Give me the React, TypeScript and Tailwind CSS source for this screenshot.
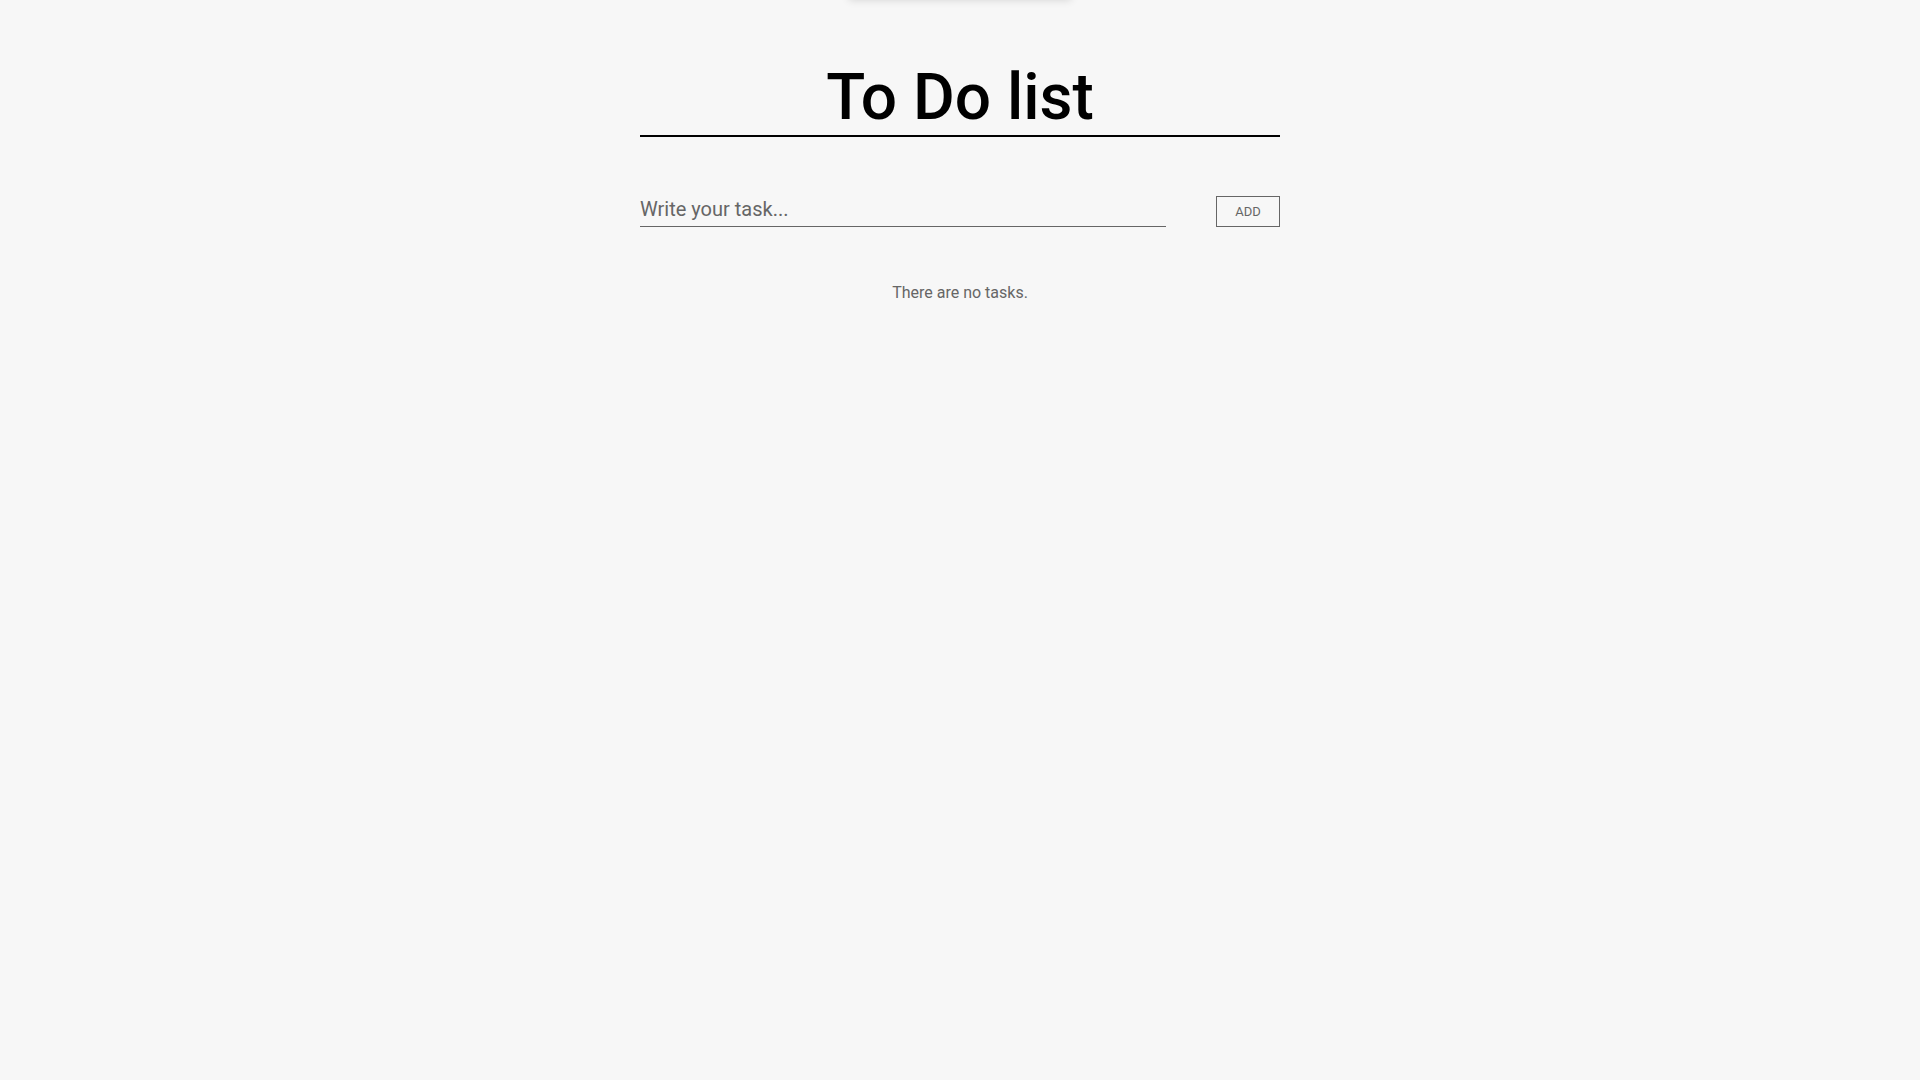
import { useState } from "react";

type Task = { id: number; text: string };

export default function App() {
  const [tasks, setTasks] = useState<Task[]>([]);
  const [value, setValue] = useState("");

  function addTask() {
    const text = value.trim();
    if (!text) return;
    setTasks((prev) => [...prev, { id: Date.now(), text }]);
    setValue("");
  }

  return (
    <div className="relative min-h-screen overflow-hidden bg-[#f7f7f7] font-['Roboto',sans-serif]">
      {/* hidden toast sitting above the viewport, only its shadow shows */}
      <div className="absolute left-1/2 top-0 h-10 w-[222px] -translate-x-1/2 -translate-y-full bg-white shadow-[0_0_8px_rgba(0,0,0,0.15)]" />

      <div className="mx-auto w-[640px] pt-[61px]">
        <h1 className="border-b-2 border-black text-center text-[64px] font-medium leading-[1.15] text-black">
          To Do list
        </h1>

        <div className="mt-[57px] flex items-end justify-between">
          <input
            value={value}
            onChange={(e) => setValue(e.target.value)}
            onKeyDown={(e) => e.key === "Enter" && addTask()}
            placeholder="Write your task..."
            className="w-[526px] border-b border-[#666] bg-transparent pb-[2px] text-[20px] text-[#333] outline-none placeholder:text-[#666]"
          />
          <button
            type="button"
            onClick={addTask}
            className="h-[31px] w-[64px] border border-[#666] text-[13px] leading-none text-[#666]"
          >
            ADD
          </button>
        </div>

        {tasks.length === 0 ? (
          <p className="mt-[54px] text-center text-[16px] text-[#666]">
            There are no tasks.
          </p>
        ) : (
          <ul className="mt-[40px] space-y-2">
            {tasks.map((task) => (
              <li key={task.id} className="text-[16px] text-[#333]">
                {task.text}
              </li>
            ))}
          </ul>
        )}
      </div>
    </div>
  );
}
